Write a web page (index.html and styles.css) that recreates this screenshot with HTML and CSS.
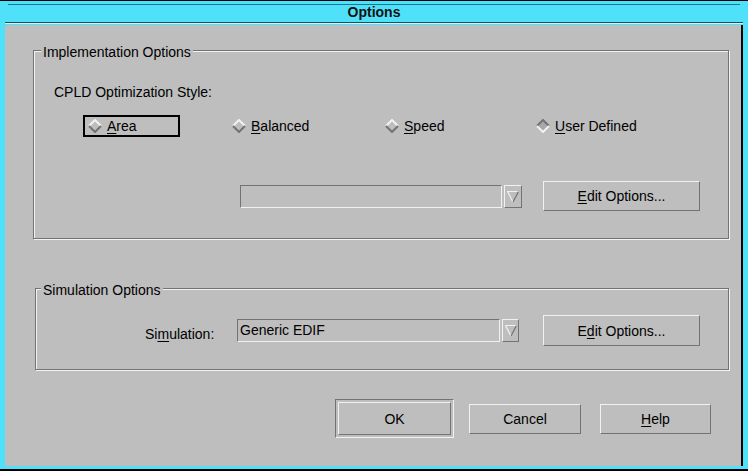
FILE: index.html
```html
<!DOCTYPE html>
<html>
<head>
<meta charset="utf-8">
<link rel="stylesheet" href="styles.css">
</head>
<body>
<div class="window">
  <div class="titlebar">
    <div class="title-line">Options</div>
  </div>
  <div class="client">
    <div class="group impl">
      <div class="legend">Implementation Options</div>
      <div class="style-label">CPLD Optimization Style:</div>
      <div class="radios">
        <div class="radio focus">
          <svg class="diamond" width="14" height="14" viewBox="0 0 14 14"><polygon points="7,1 13,7 7,13 1,7" fill="#bebebe"/><path d="M1 7 L7 1 L13 7" fill="none" stroke="#f2f2f2" stroke-width="2"/><path d="M1 7 L7 13 L13 7" fill="none" stroke="#737373" stroke-width="2"/></svg>
          <span><u>A</u>rea</span>
        </div>
        <div class="radio">
          <svg class="diamond" width="14" height="14" viewBox="0 0 14 14"><polygon points="7,1 13,7 7,13 1,7" fill="#bebebe"/><path d="M1 7 L7 1 L13 7" fill="none" stroke="#f2f2f2" stroke-width="2"/><path d="M1 7 L7 13 L13 7" fill="none" stroke="#737373" stroke-width="2"/></svg>
          <span><u>B</u>alanced</span>
        </div>
        <div class="radio">
          <svg class="diamond" width="14" height="14" viewBox="0 0 14 14"><polygon points="7,1 13,7 7,13 1,7" fill="#bebebe"/><path d="M1 7 L7 1 L13 7" fill="none" stroke="#f2f2f2" stroke-width="2"/><path d="M1 7 L7 13 L13 7" fill="none" stroke="#737373" stroke-width="2"/></svg>
          <span><u>S</u>peed</span>
        </div>
        <div class="radio">
          <svg class="diamond" width="14" height="14" viewBox="0 0 14 14"><polygon points="7,1 13,7 7,13 1,7" fill="#a9a9a9"/><path d="M1 7 L7 1 L13 7" fill="none" stroke="#737373" stroke-width="2"/><path d="M1 7 L7 13 L13 7" fill="none" stroke="#f2f2f2" stroke-width="2"/></svg>
          <span><u>U</u>ser Defined</span>
        </div>
      </div>
      <div class="combo-row">
        <div class="combo"></div>
        <div class="arrow">
          <svg width="14" height="13" viewBox="0 0 14 13"><path d="M1 1.5 H13" stroke="#f2f2f2" stroke-width="1"/><path d="M1.5 1.5 L7 12" stroke="#f2f2f2" stroke-width="1.2" fill="none"/><path d="M12.5 1.5 L7 12" stroke="#737373" stroke-width="1.2" fill="none"/></svg>
        </div>
        <button class="btn edit"><span><u>E</u>dit Options...</span></button>
      </div>
    </div>

    <div class="group sim">
      <div class="legend">Simulation Options</div>
      <div class="sim-row">
        <div class="sim-label">Si<u>m</u>ulation:</div>
        <div class="combo combo2">Generic EDIF</div>
        <div class="arrow arrow2">
          <svg width="14" height="13" viewBox="0 0 14 13"><path d="M1 1.5 H13" stroke="#f2f2f2" stroke-width="1"/><path d="M1.5 1.5 L7 12" stroke="#f2f2f2" stroke-width="1.2" fill="none"/><path d="M12.5 1.5 L7 12" stroke="#737373" stroke-width="1.2" fill="none"/></svg>
        </div>
        <button class="btn edit edit2"><span>E<u>d</u>it Options...</span></button>
      </div>
    </div>

    <div class="actions">
      <div class="default-frame"><button class="btn ok">OK</button></div>
      <button class="btn cancel">Cancel</button>
      <button class="btn help"><span><u>H</u>elp</span></button>
    </div>
  </div>
</div>
</body>
</html>
```
FILE: styles.css
```css
* { box-sizing: border-box; }
body {
  margin: 0;
  font-family: "Liberation Sans", Arial, sans-serif;
  font-size: 14px;
  color: #000;
}
u { text-underline-offset: 2px; }
.window {
  width: 748px;
  height: 471px;
  background: #4fe1f9;
  border-top: 1px solid #000;
  border-bottom: 2px solid #000;
  padding: 0 5px 3px 5px;
  display: flex;
  flex-direction: column;
}
.titlebar {
  height: 22px;
  padding-top: 3px;
  border-bottom: 1px solid #1f4f5a;
  box-shadow: 0 1px 0 #c9f7fd;
  margin-bottom: 2px;
}
.title-line {
  height: 18px;
  margin: 0 3px;
  border-top: 1px solid #1b7b8e;
  text-align: center;
  font-weight: bold;
  line-height: 15px;
  color: #111;
}
.client {
  flex: 1;
  background: #bebebe;
  border-right: 2px solid #000;
  display: flex;
  flex-direction: column;
  align-items: flex-start;
}
.group {
  border: 1px solid #737373;
  box-shadow: inset 1px 1px 0 #f2f2f2, 1px 1px 0 #f2f2f2;
}
.legend {
  width: fit-content;
  margin: -7px 0 0 7px;
  padding: 0 2px;
  background: #bebebe;
  line-height: 16px;
}
.impl {
  margin: 25px 0 0 28px;
  width: 696px;
  height: 189px;
}
.style-label {
  margin: 24px 0 0 20px;
  line-height: 16px;
}
.radios {
  display: grid;
  grid-template-columns: 144px 153px 151px auto;
  margin: 15px 0 0 49px;
}
.radio {
  display: flex;
  align-items: center;
  gap: 5px;
  height: 22px;
  border: 2px solid transparent;
  padding-left: 3px;
}
.radio.focus {
  border-color: #000;
  width: 97px;
}
.diamond { flex: none; display: block; }
.combo-row {
  display: flex;
  align-items: center;
  margin: 44px 0 0 206px;
}
.combo {
  width: 262px;
  height: 23px;
  border: 1px solid;
  border-color: #737373 #f2f2f2 #f2f2f2 #737373;
  padding-left: 2px;
  line-height: 21px;
}
.arrow {
  width: 18px;
  height: 23px;
  margin-left: 2px;
  border: 1px solid;
  border-color: #f2f2f2 #737373 #737373 #f2f2f2;
  display: flex;
  align-items: center;
  justify-content: center;
}
.arrow svg { display: block; }
.btn {
  display: flex;
  align-items: center;
  justify-content: center;
  padding: 0;
  margin: 0;
  font: inherit;
  color: #000;
  background: #bebebe;
  border: 1px solid;
  border-color: #f2f2f2 #737373 #737373 #f2f2f2;
  border-radius: 0;
}
.edit {
  width: 157px;
  height: 30px;
  margin-left: 21px;
}
.sim {
  margin: 49px 0 0 30px;
  width: 694px;
  height: 82px;
}
.sim .legend { margin-left: 5px; }
.sim-row {
  display: flex;
  align-items: center;
  margin: 17px 0 0 109px;
}
.sim-label {
  width: 92px;
  line-height: 16px;
  align-self: flex-end;
  margin-bottom: 4px;
}
.combo2 { width: 263px; }
.arrow2 { width: 17px; }
.edit2 { height: 31px; margin-left: 24px; }
.actions {
  display: flex;
  align-items: center;
  margin: 29px 0 0 330px;
}
.default-frame {
  border: 1px solid;
  border-color: #737373 #f2f2f2 #f2f2f2 #737373;
  padding: 2px;
}
.ok { width: 113px; height: 33px; }
.cancel { width: 112px; height: 30px; margin-left: 15px; }
.help { width: 111px; height: 30px; margin-left: 19px; }
```
